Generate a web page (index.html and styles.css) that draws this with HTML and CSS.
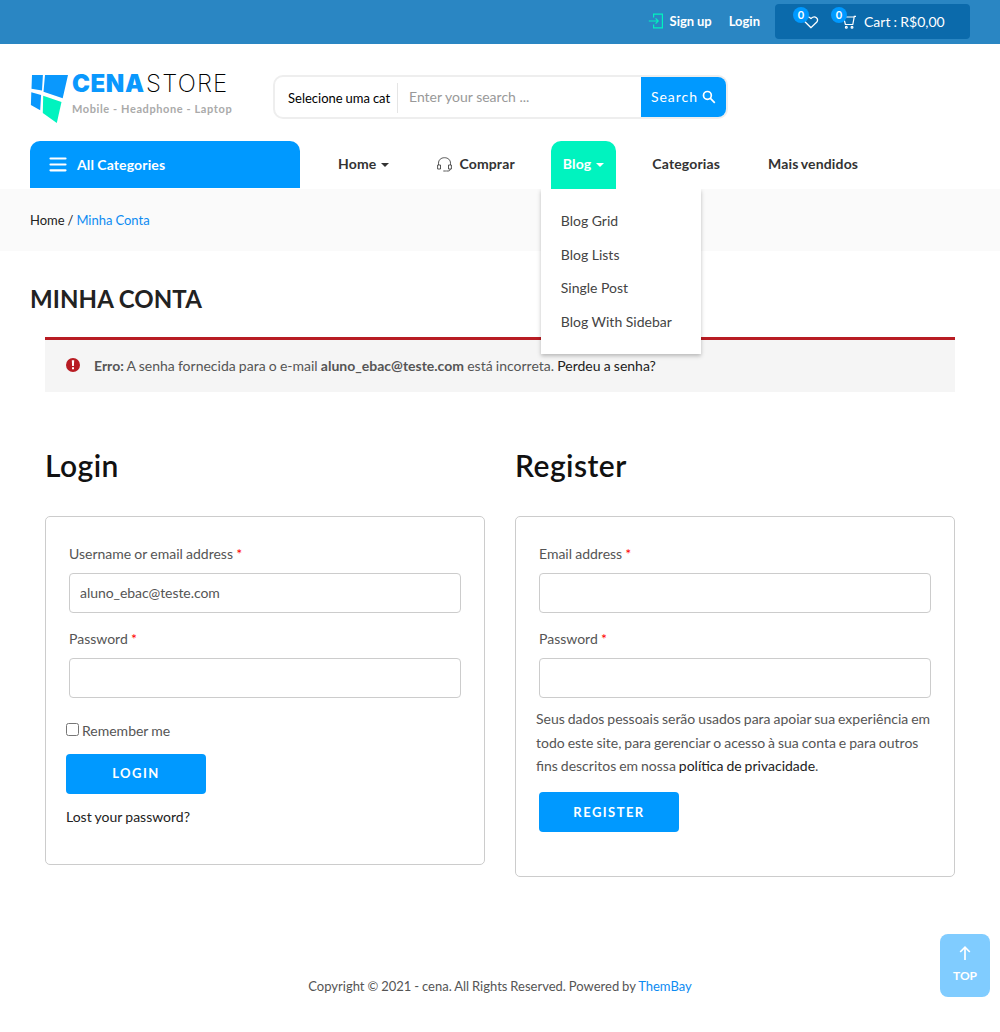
FILE: index.html
```html
<!DOCTYPE html>
<html lang="pt-BR">
<head>
<meta charset="utf-8">
<title>Minha Conta - CenaStore</title>
<link rel="stylesheet" href="styles.css">
</head>
<body>
<div class="topbar">
  <a class="signup"><svg width="16" height="16" viewBox="0 0 16 16" fill="none" stroke="#00f3bf" stroke-width="1.2"><path d="M5.6 4.5V1.1h8.8v13.8H5.6v-3.4M.8 8h9.4M7.6 5.4 10.2 8l-2.6 2.6"/></svg>Sign up</a>
  <a class="signin">Login</a>
  <div class="cartbox">
    <span class="wish"><svg width="16" height="14" viewBox="0 0 16 14" fill="none" stroke="#fff" stroke-width="1.3"><path d="M8 12.7 2.2 7C-.3 4.1 3.8-.5 8 3.400c4.200-3.900 8.300.7 5.800 3.600z"/></svg><b class="count">0</b></span>
    <span class="cart"><svg width="16" height="15" viewBox="0 0 16 15" fill="none" stroke="#fff" stroke-width="1.2"><path d="M1 3h12.300M15 2.300h-1.700L11.800 10.500H4.400L2.500 3"/><circle cx="5.300" cy="13.200" r=".9"/><circle cx="11" cy="13.200" r=".9"/></svg><b class="count">0</b></span>
    <span class="total">Cart : R$0,00</span>
  </div>
</div>
<header class="header">
  <div class="brandrow">
    <div class="logo">
      <svg width="38" height="50" viewBox="0 0 38 50"><path fill="#0a98fd" d="M2 1h10.900L12 16.500 1.500 14.800zM15 1H38l-5.300 23.300L13.500 17.700zM1.300 18.200l9.800 2.700L10.200 36.300.9 31z"/><path fill="#00f3bf" d="m13.200 21.700 18.300 6.200L26.800 49 12.800 39z"/></svg>
      <div class="logotext">
        <div class="wordmark"><span class="cena">CENA</span><span class="store">STORE</span></div>
        <div class="tagline">Mobile - Headphone - Laptop</div>
      </div>
    </div>
    <div class="search">
      <span class="select">Selecione uma cat</span>
      <span class="query">Enter your search ...</span>
      <button class="go"><span>Search</span><svg width="14" height="14" viewBox="0 0 14 14" fill="none" stroke="#fff" stroke-width="1.700"><circle cx="5.400" cy="5.400" r="3.900"/><path d="m8.200 8.200 4.600 4.600"/></svg></button>
    </div>
  </div>
  <nav class="nav">
    <div class="allcats"><svg width="18" height="15" viewBox="0 0 18 15" stroke="#fff" stroke-width="2.200" stroke-linecap="round"><path d="M1.500 1.500h15M1.500 7.500h15M1.500 13.300h15"/></svg>All Categories</div>
    <ul class="menu">
      <li>Home<i class="caret"></i></li>
      <li><svg class="headset" width="15" height="15" viewBox="0 0 15 15" fill="none" stroke="#444" stroke-width=".9"><path d="M1.500 8V6.200C1.500 2.900 4 .7 7.500.7s6 2.200 6 5.500V8M.6 8h2.900v4H.6zM11.500 8h2.900v4h-2.900zM13.200 12c0 1.500-.8 2-2.200 2H9.200M6.300 14h2.600"/></svg>Comprar</li>
      <li class="active">Blog<i class="caret"></i>
        <div class="dropdown"><a>Blog Grid</a><a>Blog Lists</a><a>Single Post</a><a>Blog With Sidebar</a></div>
      </li>
      <li>Categorias</li>
      <li>Mais vendidos</li>
    </ul>
  </nav>
</header>
<div class="crumbs">Home / <a>Minha Conta</a></div>
<main class="main">
  <h1>MINHA CONTA</h1>
  <div class="error"><svg width="14" height="14" viewBox="0 0 14 14"><circle cx="7" cy="7" r="7" fill="#b81c23"/><path fill="#fff" d="M5.800 2.300h2.400L7.900 8H6.100zM6 9.300h2v2H6z"/></svg><p><strong>Erro:</strong> A senha fornecida para o e-mail <strong>aluno_ebac@teste.com</strong> está incorreta. <a>Perdeu a senha?</a></p></div>
  <div class="columns">
    <section>
      <h2>Login</h2>
      <form class="card login">
        <label class="lbl">Username or email address <em>*</em></label>
        <input class="field" type="text" value="aluno_ebac@teste.com">
        <label class="lbl">Password <em>*</em></label>
        <input class="field" type="password">
        <label class="remember"><input type="checkbox">Remember me</label>
        <button class="btn" type="button">LOGIN</button>
        <a class="lost">Lost your password?</a>
      </form>
    </section>
    <section>
      <h2>Register</h2>
      <form class="card register">
        <label class="lbl">Email address <em>*</em></label>
        <input class="field" type="text">
        <label class="lbl">Password <em>*</em></label>
        <input class="field" type="password">
        <p class="privacy">Seus dados pessoais serão usados para apoiar sua experiência em<br>todo este site, para gerenciar o acesso à sua conta e para outros<br>fins descritos em nossa <a>política de privacidade</a>.</p>
        <button class="btn" type="button">REGISTER</button>
      </form>
    </section>
  </div>
</main>
<footer class="footer">Copyright © 2021 - cena. All Rights Reserved. Powered by <a>ThemBay</a></footer>
<a class="totop"><svg width="12" height="14" viewBox="0 0 12 14" fill="none" stroke="#fff" stroke-width="1.700"><path d="M6 14V1.200M1.200 6 6 1.200 10.800 6"/></svg>TOP</a>
</body>
</html>
```
FILE: styles.css
```css
* { box-sizing: border-box; }
body { margin: 0; height: 1032px; overflow: hidden; background: #fff; color: #555; font: 14px/24px Lato, sans-serif; word-spacing: -.4px; }
h1, h2, p, ul { margin: 0; padding: 0; }
svg { flex: none; display: block; }
button { border: 0; padding: 0; font-family: inherit; color: #fff; background: #09f; }

.topbar { display: flex; height: 44px; padding: 4px 30px 0 0; justify-content: flex-end; align-items: flex-start; background: #2a86c3; color: #fff; }
.signup, .signin { display: flex; align-items: center; height: 35px; padding-bottom: 1px; font-weight: 700; font-size: 13px; }
.signup { gap: 6px; margin-right: 17px; }
.signin { margin-right: 15px; }
.cartbox { display: flex; width: 195px; height: 35px; padding-left: 28px; align-items: center; border-radius: 4px; background: #0b6aab; }
.wish, .cart { position: relative; }
.wish { margin-right: 22px; }
.cart { margin-right: 7px; }
.count { position: absolute; left: -10px; top: -8px; width: 16px; height: 16px; border-radius: 50%; background: #09f; font-size: 11px; line-height: 16px; text-align: center; }
.cart .count { top: -7px; }

.header { height: 145px; padding: 0 30px; }
.brandrow { display: flex; height: 97px; padding-top: 30px; }
.logo { display: flex; width: 243px; gap: 4px; }
.wordmark { display: flex; height: 22px; line-height: 20px; white-space: nowrap; }
.cena { width: 74px; font: 900 24px/20px Inter, sans-serif; color: #0a98fd; letter-spacing: .6px; }
.store { font: 200 24px/20px Inter, sans-serif; color: #000; letter-spacing: 1.2px; }
.tagline { margin-top: 1px; font-size: 11px; font-weight: 700; color: #aaa; letter-spacing: .6px; word-spacing: 0; white-space: nowrap; }
.search { display: flex; width: 455px; height: 44px; margin-top: 1px; border: 2px solid #eee; border-radius: 10px; overflow: hidden; }
.select { width: 123px; height: 30px; margin-top: 6px; padding-left: 13px; border-right: 1px solid #e5e5e5; line-height: 31px; font-size: 13px; color: #000; white-space: nowrap; }
.query { flex: 1; padding-left: 11px; line-height: 40px; color: #999; word-spacing: 0; }
.go { display: flex; width: 85px; align-items: center; justify-content: center; gap: 4px; font-size: 14px; letter-spacing: 1px; }
.go span { padding-bottom: 2px; }

.nav { display: flex; height: 48px; }
.allcats { display: flex; width: 270px; height: 47px; padding-left: 19px; align-items: center; gap: 10px; border-radius: 10px 10px 0 0; background: #09f; color: #fff; font-weight: 700; letter-spacing: .14px; }
.menu { display: flex; gap: 24px; margin-left: 26px; list-style: none; color: #333; font-weight: 700; letter-spacing: .15px; word-spacing: -1px; }
.menu li { position: relative; display: flex; height: 48px; padding: 0 12px 2px; align-items: center; white-space: nowrap; }
.menu .active { background: #00f3bf; color: #fff; border-radius: 10px 10px 0 0; }
.headset { margin-right: 7px; }
.caret { margin: 2px 0 0 5px; border: 4px solid transparent; border-top-color: currentColor; border-bottom: 0; }
.dropdown { position: absolute; z-index: 2; left: -10px; top: 48px; display: flex; flex-direction: column; width: 160px; height: 165px; padding: 15px 20px; background: #fff; box-shadow: 0 2px 4px rgba(0,0,0,.25); clip-path: inset(0 -6px -8px -6px); color: #444; font-weight: 400; line-height: 33.600px; letter-spacing: 0; word-spacing: 0; }

.crumbs { height: 62px; padding-left: 30px; background: #fafafa; line-height: 62px; font-size: 13px; color: #222; }
.crumbs a, .footer a { color: #0d8bf2; }
.main { padding: 0 30px; }
.main h1 { height: 86px; padding-top: 30px; line-height: 36px; font-size: 24px; font-weight: 700; color: #222; letter-spacing: .1px; }
.error { display: flex; height: 55px; margin: 0 15px; padding: 0 21px; align-items: center; gap: 14px; border-top: 3px solid #b81c23; background: #f5f5f5; }
.error svg { margin-bottom: 2px; }
.error a, .lost, .privacy a { color: #222; }
.columns { display: flex; gap: 30px; height: 486px; padding: 55px 15px 0; align-items: flex-start; }
.columns section { width: 440px; }
.columns h2 { height: 69px; line-height: 36px; font-size: 30px; font-weight: 600; color: #111; letter-spacing: .45px; }
.card { display: flex; flex-direction: column; padding: 23px; border: 1px solid #ccc; border-radius: 5px; }
.login { height: 349px; }
.register { height: 361px; }
.lbl { height: 33px; line-height: 27px; }
.lbl em { color: #f00; font-style: normal; }
.field { height: 40px; margin-bottom: 12px; padding: 0 10px 2px; border: 1px solid #ccc; border-radius: 4px; font: inherit; color: #555; letter-spacing: -.06px; }
.remember { display: flex; height: 24px; margin: 9px 0 11px -3px; align-items: center; }
.remember input { width: 13px; height: 13px; margin: -4px 3px 0 0; }
.btn { width: 140px; height: 40px; padding-bottom: 2px; border-radius: 4px; font-size: 13px; font-weight: 700; letter-spacing: 1.450px; }
.login .btn, .lost { margin-left: -3px; }
.lost { margin-top: 11px; }
.privacy { margin: -3px -10px 14px -3px; line-height: 23.500px; white-space: nowrap; word-spacing: -.65px; }
.register .btn { padding: 0; }
.footer { padding-top: 96px; text-align: center; font-size: 13px; }
.totop { position: fixed; right: 10px; bottom: 35px; display: flex; flex-direction: column; width: 50px; height: 63px; padding-top: 12px; align-items: center; gap: 4px; border-radius: 8px; background: #80ccff; color: #fff; font-size: 12px; font-weight: 700; }
```
